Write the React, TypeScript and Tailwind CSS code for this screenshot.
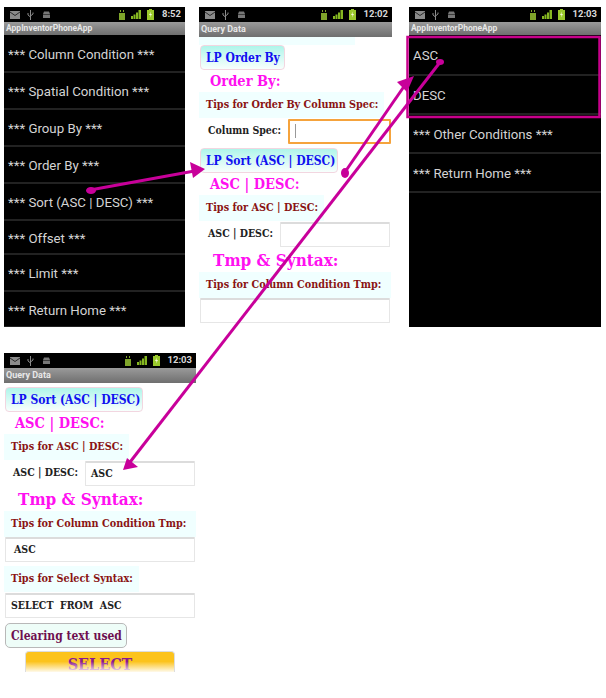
const serif = "font-['DejaVu_Serif',serif] font-stretch-condensed"

const StatusBar = ({ time }: { time: string }) => (
  <div className="flex h-[15px] items-center bg-black pl-[6px] pr-[4px] text-[#bdbdbd]">
    {/* mail */}
    <svg width="10" height="8" viewBox="0 0 10 8" className="mr-[7px]">
      <rect width="10" height="8" fill="#8a8a8a" />
      <path d="M0 1l5 3.5L10 1" fill="none" stroke="#2a2a2a" strokeWidth="1" />
    </svg>
    {/* usb */}
    <svg width="7" height="10" viewBox="0 0 7 10" className="mr-[8px]">
      <path d="M3.5 0v10M3.5 7L1 5V3M3.5 6L6 4V2.5" fill="none" stroke="#8a8a8a" strokeWidth="1" />
    </svg>
    {/* android */}
    <svg width="9" height="9" viewBox="0 0 9 9">
      <path d="M2 1.5h5l1 2.5H1zM1 4.5h7V8H1z" fill="#777" />
    </svg>
    <div className="flex-1" />
    {/* sync */}
    <svg width="6" height="10" viewBox="0 0 6 10" className="mr-[6px]">
      <path d="M1 0h1v2H1zM4 0h1v2H4zM0 3h6v7H0z" fill="#7fa52a" />
    </svg>
    {/* signal */}
    <svg width="10" height="9" viewBox="0 0 10 9" className="mr-[6px]">
      <path d="M0 6h2v3H0zM2.5 4.5h2V9h-2zM5 2.5h2V9H5zM7.5 0H10v9H7.5z" fill="#86b821" />
    </svg>
    {/* battery */}
    <svg width="7" height="11" viewBox="0 0 7 11" className="mr-[8px]">
      <path d="M2 0h3v1h2v10H0V1h2z" fill="#9ac92c" />
      <path d="M4 2.5L2 6h1.5L3 8.5 5 5H3.5z" fill="#f4f7d8" />
    </svg>
    <span className="font-['Roboto',sans-serif] text-[9.5px] font-bold text-[#d8d8d8]">{time}</span>
  </div>
)

const TitleBar = ({ title, tall }: { title: string; tall?: boolean }) => (
  <div
    className={`flex items-center bg-gradient-to-b from-[#9a9a9a] to-[#6f6f6f] pl-[2px] font-['Roboto',sans-serif] font-bold leading-none text-[#e8e8e8] ${
      tall ? 'h-[15px] text-[9px]' : 'h-[13px] text-[8.5px]'
    }`}
  >
    {title}
  </div>
)

const MenuRow = ({ label, h }: { label: string; h: string }) => (
  <div className={`flex items-center border-b-2 border-[#222] pt-[3px] pl-[4px] font-['Roboto',sans-serif] text-[13.25px] text-[#d4d4d4] ${h}`}>
    {label}
  </div>
)

const LpButton = ({ label, w }: { label: string; w: string }) => (
  <div
    className={`ml-[1px] flex h-[25px] items-center rounded-[4px] border border-[#f2d6e0] bg-gradient-to-b from-[#aef5ea] to-[#f8fffd] pl-[5px] text-[12px] font-bold text-[#1010f0] ${serif} ${w}`}
  >
    {label}
  </div>
)

const Heading = ({ label, big, ml }: { label: string; big?: boolean; ml: string }) => (
  <div className={`flex items-center font-bold text-[#ff10f0] ${serif} ${big ? 'h-[25px] pt-[3px] text-[17px]' : 'h-[22px] text-[14.5px]'} ${ml}`}>
    {label}
  </div>
)

const Tips = ({ label, w }: { label: string; w: string }) => (
  <div className={`flex h-[26px] items-center bg-[#f0ffff] pl-[7px] text-[10.75px] font-bold text-[#8a1414] ${serif} ${w}`}>
    {label}
  </div>
)

const TextBox = ({ value, w, pl, active }: { value?: string; w: string; pl: string; active?: boolean }) => (
  <div
    className={`flex h-[25px] items-center whitespace-pre rounded-[1px] bg-white text-[10.5px] font-bold text-[#222] ${serif} ${w} ${pl} ${
      active ? 'border-2 border-[#f5a33c]' : 'border border-[#e6e6e6] border-t-2 border-t-[#dcdcdc]'
    }`}
  >
    {active ? <span className="h-[14px] w-[1px] bg-[#999]" /> : value}
  </div>
)

const LabelRow = ({ label, ml, gap, children }: { label: string; ml: string; gap: string; children: React.ReactNode }) => (
  <div className={`flex h-[26px] items-center text-[10.5px] font-bold text-[#222] ${serif}`}>
    <span className={`${ml} ${gap}`}>{label}</span>
    {children}
  </div>
)

const SortSection = ({ value }: { value?: string }) => (
  <>
    <Heading label="ASC | DESC:" ml="ml-[11px]" />
    <Tips label="Tips for ASC | DESC:" w="w-[125px]" />
    <LabelRow label="ASC | DESC:" ml="ml-[9px]" gap="w-[72px]">
      <TextBox value={value} w="w-[110px]" pl="pl-[5px]" />
    </LabelRow>
    <Heading label="Tmp & Syntax:" big ml="ml-[14px]" />
    <Tips label="Tips for Column Condition Tmp:" w="w-[192px]" />
  </>
)

export default function App() {
  return (
    <div className="relative h-[698px] w-[606px] overflow-hidden bg-white">
      <div className="flex pt-[7px] pl-[4px]">
        {/* main menu */}
        <div className="h-[320px] w-[181px] overflow-hidden bg-black">
          <StatusBar time="8:52" />
          <TitleBar title="AppInventorPhoneApp" />
          <MenuRow label="*** Column Condition ***" h="h-[38px]" />
          <MenuRow label="*** Spatial Condition ***" h="h-[37px]" />
          <MenuRow label="*** Group By ***" h="h-[37px]" />
          <MenuRow label="*** Order By ***" h="h-[37px]" />
          <MenuRow label="*** Sort (ASC | DESC) ***" h="h-[37px]" />
          <MenuRow label="*** Offset ***" h="h-[34px]" />
          <MenuRow label="*** Limit ***" h="h-[37px]" />
          <MenuRow label="*** Return Home ***" h="h-[36px]" />
        </div>

        {/* order by form */}
        <div className="ml-[14px] h-[318px] w-[193px] overflow-hidden bg-white">
          <StatusBar time="12:02" />
          <TitleBar title="Query Data" tall />
          <div className="h-[8px] w-[156px] bg-[#f0ffff]" />
          <LpButton label="LP Order By" w="w-[85px]" />
          <Heading label="Order By:" ml="ml-[11px]" />
          <Tips label="Tips for Order By Column Spec:" w="w-[185px]" />
          <LabelRow label="Column Spec:" ml="ml-[9px]" gap="w-[80px]">
            <TextBox w="w-[103px]" pl="pl-[5px]" active />
          </LabelRow>
          <div className="h-[4px]" />
          <LpButton label="LP Sort (ASC | DESC)" w="w-[138px]" />
          <SortSection />
          <div className="ml-[1px]">
            <TextBox w="w-[190px]" pl="pl-[8px]" />
          </div>
        </div>

        {/* sort menu */}
        <div className="ml-[17px] h-[320px] w-[192px] overflow-hidden bg-black">
          <StatusBar time="12:03" />
          <TitleBar title="AppInventorPhoneApp" />
          <MenuRow label="ASC" h="h-[41px]" />
          <MenuRow label="DESC" h="h-[39px]" />
          <MenuRow label="*** Other Conditions ***" h="h-[39px]" />
          <MenuRow label="*** Return Home ***" h="h-[39px]" />
        </div>
      </div>

      {/* sort form */}
      <div className="mt-[26px] ml-[4px] h-[319px] w-[192px] overflow-hidden bg-white">
        <StatusBar time="12:03" />
        <TitleBar title="Query Data" tall />
        <div className="h-[4px]" />
        <LpButton label="LP Sort (ASC | DESC)" w="w-[138px]" />
        <SortSection value="ASC" />
        <div className="ml-[1px]">
          <TextBox value="ASC" w="w-[190px]" pl="pl-[8px]" />
        </div>
        <div className="h-[4px]" />
        <Tips label="Tips for Select Syntax:" w="w-[135px]" />
        <div className="mt-[1px] ml-[1px]">
          <TextBox value="SELECT  FROM  ASC" w="w-[190px]" pl="pl-[5px]" />
        </div>
        <div className="h-[5px]" />
        <div
          className={`ml-[1px] flex h-[25px] w-[122px] items-center rounded-[5px] border border-[#b8b8b8] bg-[#eefdf8] pl-[5px] text-[12px] font-bold text-[#6e1050] ${serif}`}
        >
          Clearing text used
        </div>
        <div
          className={`relative mt-[3px] ml-[21px] flex h-[22px] w-[150px] justify-center rounded-t-[4px] border-x border-t border-[#ddd] bg-[#fcc31c] pt-[5px] text-[16px] leading-none font-bold text-[#8a1a90] ${serif}`}
        >
          SELECT
          <div className="absolute inset-0 bg-gradient-to-b from-transparent from-45% to-white" />
        </div>
      </div>

      {/* annotations */}
      <svg className="absolute top-0 left-0" width="606" height="698" viewBox="0 0 606 698" fill="none">
        <rect x="407.5" y="37" width="192" height="80" stroke="#c8008c" strokeWidth="2.5" />
        <g stroke="#c8009a" strokeWidth="3" fill="#c8009a">
          <path d="M90 190L200 170" />
          <ellipse cx="91" cy="190.5" rx="5" ry="3.5" stroke="none" />
          <path d="M190 162L205 169L193 178Z" stroke="none" />
          <path d="M345 172L405 85" />
          <ellipse cx="345" cy="173" rx="4" ry="5" stroke="none" />
          <path d="M397 82L414 76L407 92Z" stroke="none" />
          <path d="M441 61L127 466" />
          <ellipse cx="440" cy="62" rx="4" ry="3" stroke="none" />
          <path d="M123 470L127 458L138 467Z" stroke="none" />
        </g>
      </svg>
    </div>
  )
}
